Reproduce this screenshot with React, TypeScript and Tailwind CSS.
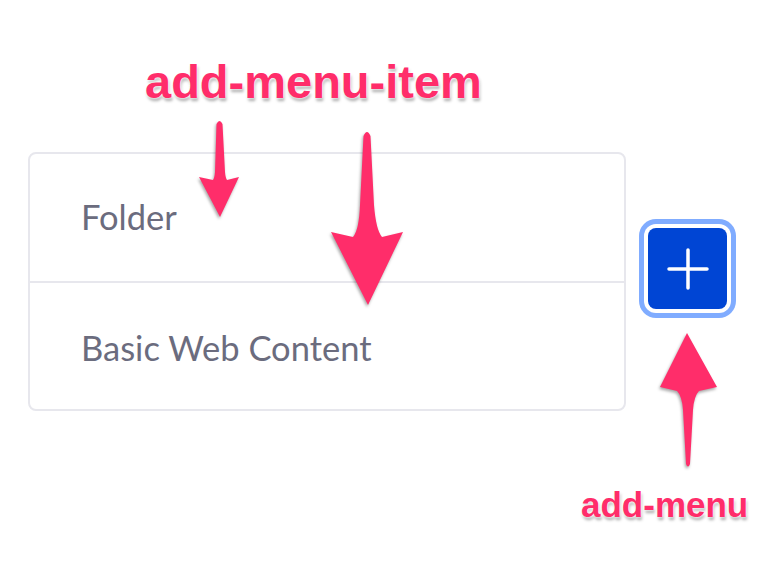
const items = ["Folder", "Basic Web Content"];

function Callouts() {
  return (
    <>
      <span className="absolute left-[145px] top-[58px] font-['Liberation_Sans',Arial,sans-serif] text-[47px] font-bold leading-none text-[#ff2d6a] [text-shadow:0_0_2px_#fff,0_0_4px_#fff,1px_3px_3px_rgba(0,0,0,0.35)]">
        add-menu-item
      </span>
      <span className="absolute left-[581px] top-[487px] font-['Liberation_Sans',Arial,sans-serif] text-[35px] font-bold leading-none text-[#ff2d6a] [text-shadow:0_0_2px_#fff,0_0_4px_#fff,1px_3px_3px_rgba(0,0,0,0.35)]">
        add-menu
      </span>
      <svg
        className="pointer-events-none absolute left-0 top-0 [filter:drop-shadow(-1px_2px_1.5px_rgba(0,0,0,0.35))]"
        width="765"
        height="586"
        viewBox="0 0 765 586"
      >
        <g fill="#ff2d6a">
          {/* small arrow pointing at Folder */}
          <path d="M216.5 124 Q219.5 118 222.5 124 L225 172 Q225.5 178 227 180 L239 177 L220 217 L199 177 L213 180 Q214.5 178 215 172 Z" />
          {/* big arrow pointing at the divider */}
          <path d="M363.5 136 Q367 128 370.5 136 L374 205 Q376 230 382 237 L403 232 L368 305 L331 232 L353 237 Q359 230 360 205 Z" />
          {/* arrow pointing up at the button */}
          <path d="M687 333 L717 387 L699 391 Q694 396 693 410 L690 464 Q688 469 686 464 L683 410 Q682 396 677 391 L660 387 Z" />
        </g>
      </svg>
    </>
  );
}

export default function App() {
  return (
    <div className="relative h-[586px] w-[765px] overflow-hidden bg-white font-['Lato','Noto_Sans',sans-serif]">
      <div className="flex items-start pl-[28px] pt-[152px]">
        <ul className="w-[598px] overflow-hidden rounded-[8px] border-2 border-[#e7e7ed] bg-white">
          {items.map((item, index) => (
            <li
              key={item}
              className={`flex items-center pl-[51px] text-[34.5px] text-[#6b6c7e] ${
                index === 0 ? "h-[129px] border-b-2 border-[#e7e7ed] pb-[2px]" : "h-[126px] pt-[4px]"
              }`}
            >
              {item}
            </li>
          ))}
        </ul>
        <button
          type="button"
          className="ml-[22px] mt-[76px] flex h-[81px] w-[79px] items-center justify-center rounded-[8px] bg-[#0045d4] shadow-[0_0_0_4px_#fff,0_0_0_9px_#80acff]"
        >
          <svg width="42" height="42" viewBox="0 0 42 42" fill="none" stroke="#fff" strokeWidth="3.5" strokeLinecap="round">
            <path d="M21 2v38M2 21h38" />
          </svg>
        </button>
      </div>
      <Callouts />
    </div>
  );
}
